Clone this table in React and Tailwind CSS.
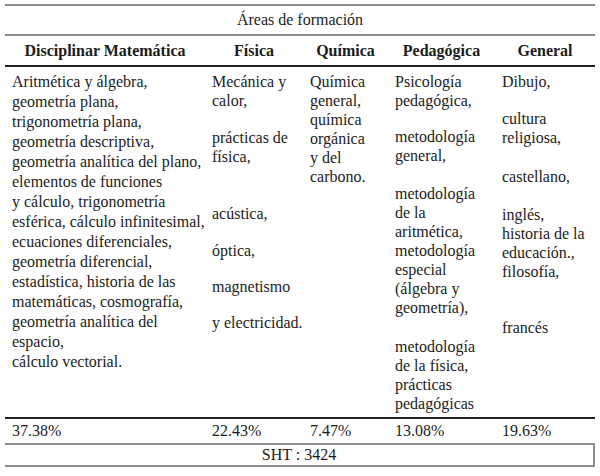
const disciplinar = [
  'Aritmética y álgebra,',
  'geometría plana,',
  'trigonometría plana,',
  'geometría descriptiva,',
  'geometría analítica del plano,',
  'elementos de funciones',
  'y cálculo, trigonometría',
  'esférica, cálculo infinitesimal,',
  'ecuaciones diferenciales,',
  'geometría diferencial,',
  'estadística, historia de las',
  'matemáticas, cosmografía,',
  'geometría analítica del',
  'espacio,',
  'cálculo vectorial.',
];

// each block: top margin class + its lines
const fisica = [
  { mt: 'mt-0', lines: ['Mecánica y', 'calor,'] },
  { mt: 'mt-[18px]', lines: ['prácticas de', 'física,'] },
  { mt: 'mt-[38px]', lines: ['acústica,'] },
  { mt: 'mt-[18px]', lines: ['óptica,'] },
  { mt: 'mt-[17px]', lines: ['magnetismo'] },
  { mt: 'mt-[17px]', lines: ['y electricidad.'] },
];

const quimica = [
  { mt: 'mt-0', lines: ['Química', 'general,', 'química', 'orgánica', 'y del', 'carbono.'] },
];

const pedagogica = [
  { mt: 'mt-0', lines: ['Psicología', 'pedagógica,'] },
  { mt: 'mt-[17px]', lines: ['metodología', 'general,'] },
  { mt: 'mt-[19px]', lines: ['metodología', 'de la', 'aritmética,', 'metodología', 'especial', '(álgebra y', 'geometría),'] },
  { mt: 'mt-[20px]', lines: ['metodología', 'de la física,', 'prácticas', 'pedagógicas'] },
];

const general = [
  { mt: 'mt-0', lines: ['Dibujo,'] },
  { mt: 'mt-[18px]', lines: ['cultura', 'religiosa,'] },
  { mt: 'mt-[20px]', lines: ['castellano,'] },
  { mt: 'mt-[19px]', lines: ['inglés,', 'historia de la', 'educación.,', 'filosofía,'] },
  { mt: 'mt-[37px]', lines: ['francés'] },
];

const Blocks = ({ blocks }) => (
  <div className="pl-[7px] pt-[5px]">
    {blocks.map((b, i) => (
      <div key={i} className={b.mt}>
        {b.lines.map((l, j) => (
          <div key={j} className="leading-[19px] whitespace-nowrap">{l}</div>
        ))}
      </div>
    ))}
  </div>
);

const grid = 'grid grid-cols-[200px_98px_85px_107px_100px]';

export default function App() {
  return (
    <div className="w-[600px] h-[476px] bg-white pt-[4px] pl-[5px] text-[16px] text-[#1c1c1c] [font-family:'Liberation_Serif',serif]">
      <div className="w-[590px]">
        <div className="h-[30px] border-t-2 border-[#8c8c8c] flex items-center justify-center">
          Áreas de formación
        </div>

        <div className={`${grid} h-[31px] border-t-2 border-[#8c8c8c] items-center font-bold text-center`}>
          <div>Disciplinar Matemática</div>
          <div>Física</div>
          <div>Química</div>
          <div>Pedagógica</div>
          <div>General</div>
        </div>

        <div className={`${grid} h-[352px] border-t-2 border-[#222]`}>
          <div className="pl-[7px] pt-[5px]">
            {disciplinar.map((l, i) => (
              <div key={i} className="leading-[20px] whitespace-nowrap">{l}</div>
            ))}
          </div>
          <Blocks blocks={fisica} />
          <Blocks blocks={quimica} />
          <Blocks blocks={pedagogica} />
          <Blocks blocks={general} />
        </div>

        <div className={`${grid} h-[26px] border-t-2 border-[#222] items-center`}>
          <div className="pl-[7px]">37.38%</div>
          <div className="pl-[7px]">22.43%</div>
          <div className="pl-[7px]">7.47%</div>
          <div className="pl-[7px]">13.08%</div>
          <div className="pl-[7px]">19.63%</div>
        </div>

        <div className="h-[24px] border-t-2 border-b-2 border-r-2 border-[#8c8c8c] flex items-center justify-center">
          SHT : 3424
        </div>
      </div>
    </div>
  );
}
